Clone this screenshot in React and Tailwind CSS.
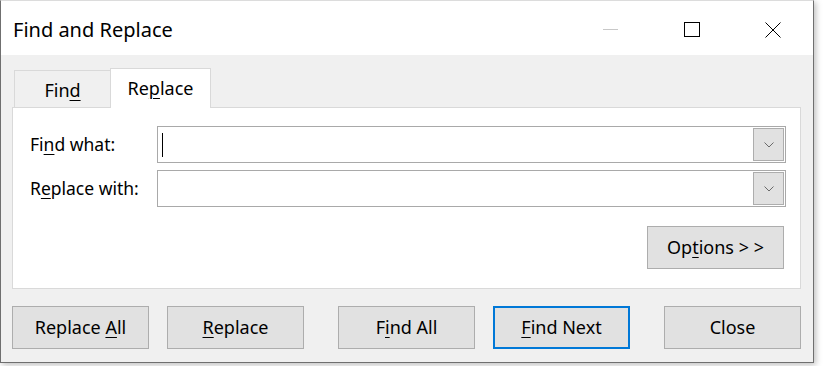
import React from 'react';

const U = ({ children }) => <span className="underline underline-offset-[3px] decoration-1">{children}</span>;

const ComboField = ({ caret }) => (
  <div className="flex-1 h-[37px] bg-white border border-[#a9a9a9] flex items-center justify-between pl-[4px] pr-[1px]">
    <div className="h-[24px] flex items-center">
      {caret && <div className="w-px h-[24px] bg-black" />}
    </div>
    <div className="w-[31px] h-[33px] bg-[#e1e1e1] border border-[#adadad] flex items-center justify-center">
      <svg width="10" height="6" viewBox="0 0 10 6" fill="none">
        <path d="M0.5 0.5 L5 5 L9.5 0.5" stroke="#6a6a6a" strokeWidth="1" />
      </svg>
    </div>
  </div>
);

const DlgButton = ({ children, primary, className = '' }) => (
  <button
    className={`w-[137px] h-[43px] bg-[#e1e1e1] text-[18px] text-black flex items-center justify-center ${
      primary ? 'border-2 border-[#0078d7]' : 'border border-[#adadad]'
    } ${className}`}
  >
    {children}
  </button>
);

export default function App() {
  return (
    <div className="w-[825px] h-[366px] bg-white relative" style={{ fontFamily: '"Noto Sans", "Open Sans", sans-serif' }}>
      <div className="w-[814px] h-[363px] flex flex-col border border-[#6f6f6f] border-t-[#dcdcdc] shadow-[2px_2px_6px_rgba(0,0,0,0.25)] bg-[#f0f0f0]">
        {/* title bar */}
        <div className="h-[54px] bg-white flex items-center shrink-0">
          <div className="pl-[12px] text-[20px] text-black flex-1 pt-[4px]">Find and Replace</div>
          <div className="flex h-full">
            <div className="w-[81px] h-full flex items-center justify-center">
              <div className="w-[15px] h-px bg-[#c8c8c8] mt-[3px]" />
            </div>
            <div className="w-[81px] h-full flex items-center justify-center">
              <div className="w-[16px] h-[15px] border border-black mt-[3px]" />
            </div>
            <div className="w-[81px] h-full flex items-center justify-center">
              <svg width="16" height="16" viewBox="0 0 16 16" className="mt-[3px]">
                <path d="M0.5 0.5 L15.5 15.5 M15.5 0.5 L0.5 15.5" stroke="black" strokeWidth="1" />
              </svg>
            </div>
          </div>
        </div>

        {/* body */}
        <div className="flex-1 flex flex-col pl-[11px] pr-[12px]">
          {/* tabs */}
          <div className="flex items-end mt-[13px] ml-[2px] h-[39px]">
            <div className="w-[96px] h-[37px] border-t border-l border-[#d9d9d9] flex items-center justify-center text-[18px] text-black pt-[2px]">
              Fin<U>d</U>
            </div>
            <div className="w-[101px] h-[40px] border-t border-l border-r border-[#d9d9d9] bg-white flex items-center justify-center text-[18px] text-black relative top-px z-10">
              Re<U>p</U>lace
            </div>
          </div>

          {/* panel */}
          <div className="h-[182px] bg-white border border-[#d9d9d9] flex flex-col pt-[18px] pl-[17px] pr-[14px]">
            <div className="flex items-center">
              <div className="w-[127px] text-[17.5px] text-black">Fi<U>n</U>d what:</div>
              <ComboField caret />
            </div>
            <div className="flex items-center mt-[7px]">
              <div className="w-[127px] text-[17.5px] text-black">R<U>e</U>place with:</div>
              <ComboField />
            </div>
            <div className="flex justify-end mt-[19px] pr-[2px]">
              <DlgButton>
                Op<U>t</U>ions &gt; &gt;
              </DlgButton>
            </div>
          </div>

          {/* buttons */}
          <div className="flex mt-[17px]">
            <DlgButton>
              Replace&nbsp;<U>A</U>ll
            </DlgButton>
            <DlgButton className="ml-[18px]">
              <U>R</U>eplace
            </DlgButton>
            <DlgButton className="ml-[34px]">
              F<U>i</U>nd All
            </DlgButton>
            <DlgButton primary className="ml-[18px]">
              <U>F</U>ind Next
            </DlgButton>
            <DlgButton className="ml-[34px]">Close</DlgButton>
          </div>
        </div>
      </div>
    </div>
  );
}
